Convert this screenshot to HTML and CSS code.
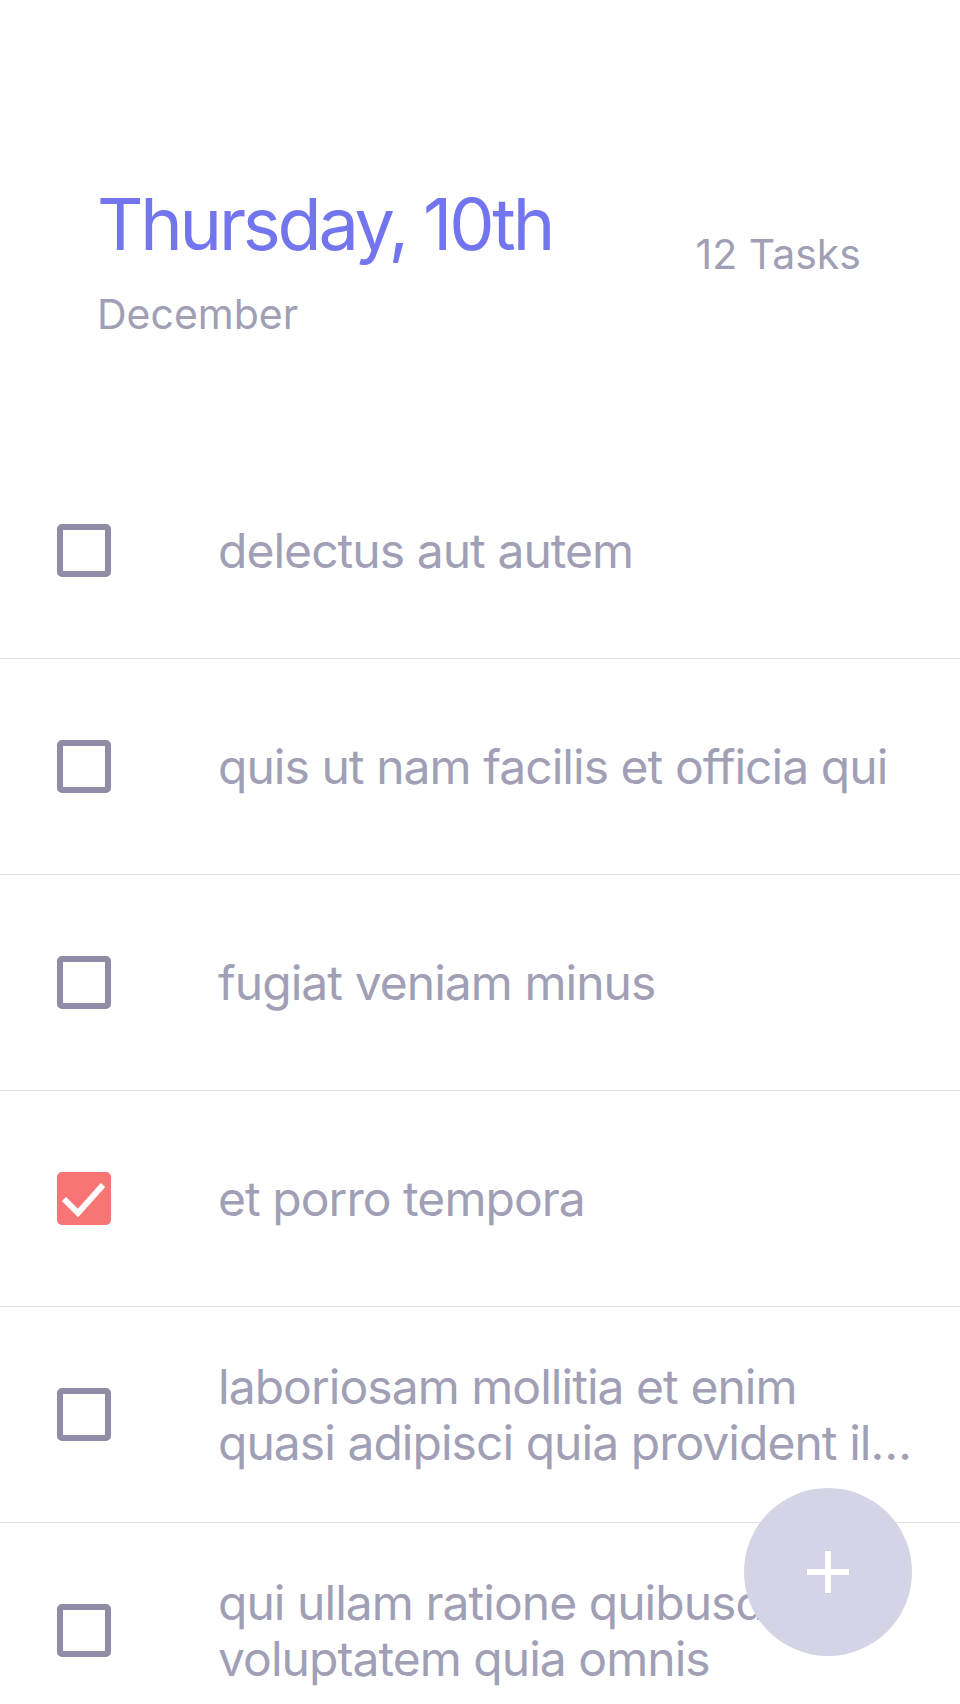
FILE: index.html
```html
<!DOCTYPE html>
<html lang="en">
<head>
<meta charset="utf-8">
<title>Tasks</title>
<link rel="stylesheet" href="styles.css">
</head>
<body>
<div class="app">
  <header class="header">
    <div class="date">
      <h1 class="day">Thursday, 10th</h1>
      <div class="month">December</div>
    </div>
    <div class="count">12 Tasks</div>
  </header>
  <ul class="tasks">
    <li class="task">
      <span class="box"></span>
      <span class="label">delectus aut autem</span>
    </li>
    <li class="task">
      <span class="box"></span>
      <span class="label">quis ut nam facilis et officia qui</span>
    </li>
    <li class="task">
      <span class="box"></span>
      <span class="label">fugiat veniam minus</span>
    </li>
    <li class="task">
      <span class="box checked">
        <svg viewBox="0 0 54 54" width="54" height="54"><path d="M7 27 L21 41 L46 13" fill="none" stroke="#fff" stroke-width="6"/></svg>
      </span>
      <span class="label">et porro tempora</span>
    </li>
    <li class="task">
      <span class="box"></span>
      <span class="label lines">
        <span class="line">laboriosam mollitia et enim</span>
        <span class="line clip">quasi adipisci quia provident illum</span>
      </span>
    </li>
    <li class="task">
      <span class="box"></span>
      <span class="label">qui ullam ratione quibusdam voluptatem quia omnis</span>
    </li>
    <li class="task">
      <span class="box"></span>
      <span class="label">illo expedita consequatur quia in</span>
    </li>
  </ul>
  <button class="fab" aria-label="Add task">
    <svg viewBox="0 0 42 42" width="42" height="42"><path d="M21 0 V42 M0 21 H42" stroke="#fff" stroke-width="6"/></svg>
  </button>
</div>
</body>
</html>
```
FILE: styles.css
```css
* { box-sizing: border-box; }
html, body { margin: 0; padding: 0; background: #fff; }
body { font-family: Inter, "Noto Sans", sans-serif; }
.app {
  position: relative;
  width: 960px;
  height: 1704px;
  overflow: hidden;
}
.header {
  display: flex;
  justify-content: space-between;
  align-items: flex-start;
  padding: 188px 99px 105px 97px;
}
.day {
  margin: 0;
  font-size: 72px;
  line-height: 72px;
  font-weight: 400;
  letter-spacing: -0.045em;
  color: #7375ee;
}
.month {
  margin-top: 30px;
  font-size: 41px;
  line-height: 48px;
  color: #a19fb6;
}
.count {
  margin-top: 42px;
  font-size: 41px;
  line-height: 48px;
  color: #a19fb6;
}
.tasks {
  list-style: none;
  margin: 0;
  padding: 0;
}
.task {
  display: flex;
  align-items: center;
  gap: 107px;
  height: 216px;
  padding: 0 44px 0 57px;
  border-bottom: 1px solid #e0e0e0;
}
.box {
  flex: none;
  width: 54px;
  height: 53px;
  border: 6px solid #8f8ca8;
  border-radius: 5px;
  position: relative;
}
.box.checked {
  background: #f77575;
  border-color: #f77575;
}
.box.checked svg {
  position: absolute;
  left: -6px;
  top: -6px;
}
.label {
  min-width: 0;
  font-size: 48px;
  line-height: 56px;
  letter-spacing: -0.02em;
  color: #a19fb6;
}
.label.lines {
  display: flex;
  flex-direction: column;
  flex: 1;
}
.line {
  white-space: nowrap;
}
.line.clip {
  overflow: hidden;
  text-overflow: ellipsis;
}
.fab {
  position: absolute;
  right: 48px;
  bottom: 48px;
  width: 168px;
  height: 168px;
  border: none;
  border-radius: 50%;
  background: #d3d4e5;
  display: flex;
  align-items: center;
  justify-content: center;
  padding: 0;
}
```
